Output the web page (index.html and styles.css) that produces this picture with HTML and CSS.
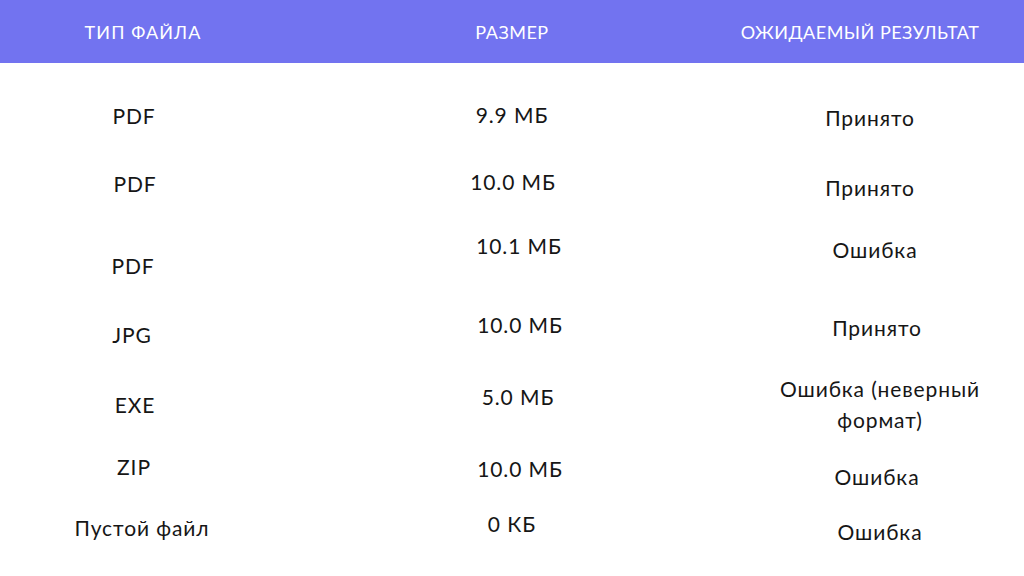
FILE: index.html
```html
<!DOCTYPE html>
<html lang="ru">
<head>
<meta charset="utf-8">
<title>Загрузка файлов</title>
<link rel="stylesheet" href="styles.css">
</head>
<body>
<div class="page">
  <header class="head">
    <div class="h h1">ТИП ФАЙЛА</div>
    <div class="h h2">РАЗМЕР</div>
    <div class="h h3">ОЖИДАЕМЫЙ РЕЗУЛЬТАТ</div>
  </header>
  <main class="table">
    <div class="col col1">
      <div class="cell">PDF</div>
      <div class="cell">PDF</div>
      <div class="cell">PDF</div>
      <div class="cell">JPG</div>
      <div class="cell">EXE</div>
      <div class="cell">ZIP</div>
      <div class="cell">Пустой файл</div>
    </div>
    <div class="col col2">
      <div class="cell">9.9 МБ</div>
      <div class="cell">10.0 МБ</div>
      <div class="cell">10.1 МБ</div>
      <div class="cell">10.0 МБ</div>
      <div class="cell">5.0 МБ</div>
      <div class="cell">10.0 МБ</div>
      <div class="cell">0 КБ</div>
    </div>
    <div class="col col3">
      <div class="cell">Принято</div>
      <div class="cell">Принято</div>
      <div class="cell">Ошибка</div>
      <div class="cell">Принято</div>
      <div class="cell two">Ошибка (неверный<br>формат)</div>
      <div class="cell">Ошибка</div>
      <div class="cell">Ошибка</div>
    </div>
  </main>
</div>
</body>
</html>
```

FILE: styles.css
```css
* { box-sizing: border-box; }
html, body { margin: 0; padding: 0; background: #fff; }
body {
  width: 1024px;
  height: 576px;
  overflow: hidden;
  font-family: "Lato", "Open Sans", sans-serif;
  color: #161616;
}
.page { width: 1024px; height: 576px; }

.head {
  height: 63px;
  background: #7273f0;
  display: grid;
  grid-template-columns: 286px 452px 244px;
  align-items: center;
  color: #fff;
  font-size: 18px;
  letter-spacing: 0.5px;
}
.h { text-align: center; line-height: 24px; }
.h1 { letter-spacing: 1.1px; }

.table {
  display: grid;
  grid-template-columns: 268px 496px 226px;
}
.col {
  display: flex;
  flex-direction: column;
  align-items: center;
}
.cell {
  font-size: 21px;
  line-height: 28px;
  letter-spacing: 0.9px;
  white-space: nowrap;
  text-align: center;
}
.cell.two { line-height: 31px; }

/* column 1 */
.col1 .cell:nth-child(1) { margin-top: 39px; }
.col1 .cell:nth-child(2) { margin-top: 40px; margin-left: 2px; }
.col1 .cell:nth-child(3) { margin-top: 54px; margin-right: 2px; }
.col1 .cell:nth-child(4) { margin-top: 41px; margin-right: 4px; }
.col1 .cell:nth-child(5) { margin-top: 42px; margin-left: 2px; }
.col1 .cell:nth-child(6) { margin-top: 34px; }
.col1 .cell:nth-child(7) { margin-top: 33px; margin-left: 16px; }

/* column 2 */
.col2 .cell:nth-child(1) { margin-top: 38px; margin-right: 8px; }
.col2 .cell:nth-child(2) { margin-top: 39px; margin-right: 6px; }
.col2 .cell:nth-child(3) { margin-top: 36px; margin-left: 6px; }
.col2 .cell:nth-child(4) { margin-top: 51px; margin-left: 8px; }
.col2 .cell:nth-child(5) { margin-top: 44px; margin-left: 4px; }
.col2 .cell:nth-child(6) { margin-top: 44px; margin-left: 8px; }
.col2 .cell:nth-child(7) { margin-top: 27px; margin-right: 8px; }

/* column 3 */
.col3 .cell:nth-child(1) { margin-top: 41px; margin-right: 14px; }
.col3 .cell:nth-child(2) { margin-top: 42px; margin-right: 14px; }
.col3 .cell:nth-child(3) { margin-top: 34px; margin-right: 4px; }
.col3 .cell:nth-child(4) { margin-top: 50px; }
.col3 .cell:nth-child(5) { margin-top: 31px; margin-left: 6px; }
.col3 .cell:nth-child(6) { margin-top: 28px; }
.col3 .cell:nth-child(7) { margin-top: 27px; margin-left: 6px; }
```
